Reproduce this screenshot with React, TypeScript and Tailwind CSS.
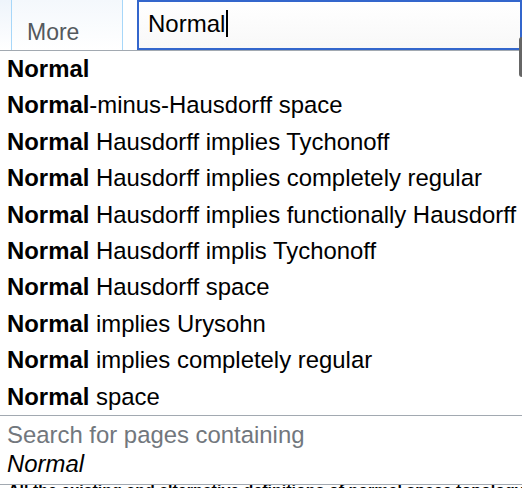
import React from 'react';

const results: [string, string][] = [
    ['Normal', ''],
    ['Normal', '-minus-Hausdorff space'],
    ['Normal', ' Hausdorff implies Tychonoff'],
    ['Normal', ' Hausdorff implies completely regular'],
    ['Normal', ' Hausdorff implies functionally Hausdorff'],
    ['Normal', ' Hausdorff implis Tychonoff'],
    ['Normal', ' Hausdorff space'],
    ['Normal', ' implies Urysohn'],
    ['Normal', ' implies completely regular'],
    ['Normal', ' space'],
];

export default function App() {
    return (
        <div
            className="relative w-[522px] h-[488px] overflow-hidden bg-white text-black"
            style={{ fontFamily: '"Liberation Sans", Arial, sans-serif' }}
        >
            {/* Header: tabs + search box */}
            <div className="flex h-[51px] border-b border-[#a2a9b1]">
                <div className="w-[12px] bg-gradient-to-b from-[#eef4fb] to-white border-r border-[#a7d7f9]" />
                <div className="w-[111px] flex items-end pb-[6px] pl-[15px] bg-gradient-to-b from-[#f4f8fc] to-white border-r border-[#a7d7f9]">
                    <span className="text-[23px] leading-none text-[#54595d]">More</span>
                </div>
                <div className="w-[14px] bg-white" />
                <div className="flex-1 flex items-center pl-[9px] pb-[3px] border-2 border-[#3366cc] bg-gradient-to-b from-white to-[#f8f8f8]">
                    <span className="text-[24px] leading-none">Normal</span>
                    <span className="w-[1.5px] h-[27px] bg-black ml-[1px]" />
                </div>
            </div>

            {/* Suggestions */}
            <div className="flex flex-col">
                {results.map(([bold, rest], i) => (
                    <div key={i} className="h-[36.4px] shrink-0 overflow-hidden pl-[7px] text-[23.9px] leading-[36.4px] whitespace-nowrap">
                        <b className="font-bold">{bold}</b>
                        {rest}
                    </div>
                ))}
            </div>

            <div className="flex flex-col border-t border-b border-[#a2a9b1] bg-white pl-[7px] pt-[4px] h-[70px]">
                <div className="text-[23.9px] leading-[29px] text-[#72777d]">Search for pages containing</div>
                <div className="text-[23.9px] leading-[29px] italic">Normal</div>
            </div>

            {/* Page behind, peeking out under the dropdown */}
            <div className="relative h-[4px] overflow-hidden">
                <div className="absolute left-[8px] top-[-2px] text-[16px] leading-[16px] font-bold whitespace-nowrap">
                    All the existing and alternative definitions of normal space topology Hausdorff
                </div>
            </div>

            {/* Scrollbar */}
            <div className="absolute right-0 top-[37px] w-[3px] h-[40px] bg-[#666] rounded-l-sm" />
        </div>
    );
}
